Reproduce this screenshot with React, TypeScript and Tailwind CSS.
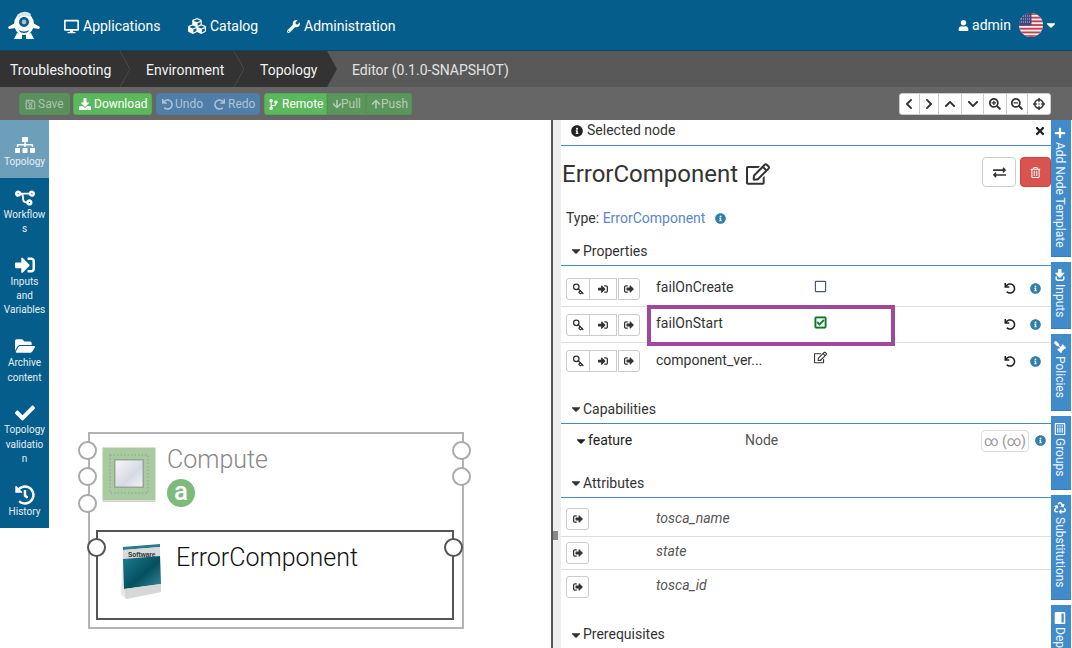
import type { ReactNode } from "react";
import { Key } from "lucide-react";
import {
  FaArrowDown,
  FaArrowUp,
  FaCaretDown,
  FaCheck,
  FaChevronDown,
  FaChevronLeft,
  FaChevronRight,
  FaChevronUp,
  FaCodeBranch,
  FaCrosshairs,
  FaCubes,
  FaDesktop,
  FaDownload,
  FaExchangeAlt,
  FaFolderOpen,
  FaGavel,
  FaHistory,
  FaInfoCircle,
  FaPlus,
  FaRecycle,
  FaRedo,
  FaRegCheckSquare,
  FaRegEdit,
  FaRegListAlt,
  FaRegSave,
  FaRegSquare,
  FaRegTrashAlt,
  FaSearchMinus,
  FaSearchPlus,
  FaSignInAlt,
  FaSignOutAlt,
  FaSitemap,
  FaTimes,
  FaUndo,
  FaUser,
  FaWindowMaximize,
  FaWrench,
} from "react-icons/fa";

function Logo() {
  return (
    <svg viewBox="0 0 32 32" className="h-[32px] w-[32px]">
      <ellipse cx="16" cy="15" rx="10" ry="11" fill="#fff" />
      <path d="M9 6 Q16 0 23 5 L22 8 Q16 5 10 9 Z" fill="#d8e6ee" />
      <path d="M7 14 L0 18 L1 20 L7 19 Z M25 14 L32 18 L31 20 L25 19 Z" fill="#fff" />
      <path d="M9 24 L6 30 L14 30 L14 25 Z M23 24 L26 30 L18 30 L18 25 Z" fill="#fff" />
      <circle cx="16" cy="13" r="5" fill="#055d8c" />
      <circle cx="16" cy="13" r="2.4" fill="#9fc3d6" />
      <path d="M11 21 Q16 24 21 21 L20 23 Q16 25 12 23 Z" fill="#055d8c" />
    </svg>
  );
}

function Flag() {
  const stripes = [0, 2, 4, 6, 8, 10, 12];
  return (
    <svg viewBox="0 0 24 24" className="h-[24px] w-[24px]">
      <defs>
        <clipPath id="flag-clip">
          <circle cx="12" cy="12" r="12" />
        </clipPath>
      </defs>
      <g clipPath="url(#flag-clip)">
        <rect width="24" height="24" fill="#f3f0f0" />
        {stripes.map((s) => (
          <rect key={s} y={s * 1.85} width="24" height="1.85" fill="#c2404f" />
        ))}
        <rect width="12.5" height="12.5" fill="#3f4a80" />
        <path d="M2 3h9M2 6h9M2 9h9" stroke="#b9bfdc" strokeWidth="1" strokeDasharray="1 1" />
      </g>
    </svg>
  );
}

function ChipIcon() {
  return (
    <svg viewBox="0 0 54 56" className="h-[56px] w-[54px]">
      <defs>
        <linearGradient id="chip-core" x1="0" y1="0" x2="1" y2="1">
          <stop offset="0" stopColor="#f7f8fa" />
          <stop offset="0.6" stopColor="#d6d9e2" />
          <stop offset="1" stopColor="#f3f4f6" />
        </linearGradient>
      </defs>
      <rect x="0.5" y="0.5" width="53" height="53" fill="#a9c9a0" />
      <rect x="0.5" y="53.5" width="53" height="1.5" fill="#d5d5d5" />
      <rect x="8" y="8" width="38" height="38" fill="none" stroke="#93b18d" strokeWidth="1.5" strokeDasharray="1.5 2" />
      <rect x="12" y="12" width="30" height="29" fill="#97a694" />
      <rect x="13.5" y="13.5" width="27" height="26" fill="url(#chip-core)" />
    </svg>
  );
}

function BoxIcon() {
  return (
    <svg viewBox="0 0 42 56" className="h-[56px] w-[42px]">
      <defs>
        <linearGradient id="box-front" x1="0" y1="0" x2="1" y2="1">
          <stop offset="0" stopColor="#1d7c8f" />
          <stop offset="0.55" stopColor="#04505f" />
          <stop offset="1" stopColor="#3a8a9b" />
        </linearGradient>
      </defs>
      <path d="M3 4 L40 1 L41 48 L6 55 L1 50 Z" fill="#e6e8e8" />
      <path d="M3 3 L40 0 L40 3 L3 6 Z" fill="#2b7a8c" />
      <path d="M3 6 L40 3 L40 12 L3 15 Z" fill="#d5dada" />
      <text x="8" y="12.5" fontSize="6.5" fontWeight="700" fill="#333" fontFamily="Liberation Sans, sans-serif">
        Software
      </text>
      <path d="M3 15 L40 12 L41 40 L4 45 Z" fill="url(#box-front)" />
      <path d="M4 45 L41 40 L41 48 L6 55 Z" fill="#d6d8d8" />
    </svg>
  );
}

function Port({ className }: { className: string }) {
  return <div className={`absolute h-[19px] w-[19px] rounded-full border-2 bg-white ${className}`} />;
}

function ToolBtn({
  icon,
  label,
  className,
}: {
  icon: ReactNode;
  label: string;
  className: string;
}) {
  return (
    <button type="button" className={`flex h-[22px] items-center border px-[5px] pt-px text-[12px] [&>svg]:shrink-0 ${className}`}>
      {icon}
      {label}
    </button>
  );
}

function NavBtn({ icon, width }: { icon: ReactNode; width: string }) {
  return (
    <button
      type="button"
      className={`flex h-full items-center justify-center border-r border-[#ccc] text-[12px] text-[#333] last:border-r-0 ${width}`}
    >
      {icon}
    </button>
  );
}

function Crumb({ label, width }: { label: string; width: string }) {
  return (
    <div className={`flex h-full items-center pt-[3px] ${width}`}>
      <span className="text-[14px] text-[#f2f2f2]">{label}</span>
    </div>
  );
}

function CrumbSep() {
  return (
    <svg viewBox="0 0 10 36" className="h-[36px] w-[10px] shrink-0">
      <path d="M0 0 L10 18 L0 36" fill="none" stroke="#4a4a4a" strokeWidth="1" />
    </svg>
  );
}

function SideItem({
  icon,
  label,
  first,
  active,
}: {
  icon: ReactNode;
  label: string;
  first?: boolean;
  active?: boolean;
}) {
  return (
    <div
      className={`flex flex-col items-center pb-[8.5px] ${first ? "pt-[15px]" : "pt-[10px]"} ${active ? "bg-[#6d9fba]" : ""}`}
    >
      <div className="flex h-[20px] items-center text-[20px] text-white">{icon}</div>
      <div className="w-full px-[3px] text-center text-[10px] leading-[14.3px] wrap-anywhere text-[#e4eef4]">{label}</div>
    </div>
  );
}

function SectionHead({ label }: { label: string }) {
  return (
    <div className="flex h-[32px] shrink-0 items-center border-b border-[#428bca] pl-[8px] pt-[3px] text-[14px] text-[#333]">
      <FaCaretDown className="text-[14px]" />
      {label}
    </div>
  );
}

function Info({ className }: { className?: string }) {
  return <FaInfoCircle className={`shrink-0 text-[11px] text-[#2f7fa8] ${className ?? ""}`} />;
}

function SmallBtn({ icon, className }: { icon: ReactNode; className: string }) {
  return (
    <button
      type="button"
      className={`flex h-[22px] items-center justify-center border border-[#ccc] bg-white text-[10px] text-[#333] ${className}`}
    >
      {icon}
    </button>
  );
}

function PropRow({ name, value, last }: { name: string; value: ReactNode; last?: boolean }) {
  return (
    <div className={`flex h-[36px] items-center pl-[5px] ${last ? "" : "border-b border-[#ddd]"}`}>
      <div className="flex w-[90px] shrink-0">
        <SmallBtn icon={<Key size={12} strokeWidth={2.5} className="rotate-90" />} className="w-[24px] rounded-l-[3px]" />
        <SmallBtn icon={<FaSignInAlt />} className="-ml-px w-[28px]" />
        <SmallBtn icon={<FaSignOutAlt />} className="ml-px w-[22px] rounded-r-[3px]" />
      </div>
      <span className="w-[158px] shrink-0 -translate-y-px text-[14px] text-[#333]">{name}</span>
      <span className="flex w-[183px] shrink-0 -translate-y-[2px] items-center text-[13px]">{value}</span>
      <FaUndo className="w-[26px] shrink-0 text-[11px] text-[#222]" />
      <Info className="ml-[7px]" />
    </div>
  );
}

function AttrRow({ name, last }: { name: string; last?: boolean }) {
  return (
    <div className={`flex h-[33.5px] items-center pl-[5px] ${last ? "" : "border-b border-[#ddd]"}`}>
      <div className="w-[90px] shrink-0">
        <SmallBtn icon={<FaSignOutAlt />} className="w-[23px] rounded-[3px]" />
      </div>
      <span className="-translate-y-px text-[14px] italic text-[#555]">{name}</span>
    </div>
  );
}

function SideTab({ icon, label, height }: { icon: ReactNode; label: string; height: string }) {
  return (
    <div
      className={`mb-[5px] flex w-[20px] shrink-0 items-center gap-[3px] overflow-hidden border-b border-[#3a7bb5] bg-[#428bca] pr-[2px] pt-[7px] text-[12px] text-[#eef5fb] [writing-mode:vertical-rl] ${height}`}
    >
      <span className="flex h-[12px] w-[18px] items-center justify-center text-[12px] text-white">{icon}</span>
      <span className="whitespace-nowrap">{label}</span>
    </div>
  );
}

export default function App() {
  return (
    <div className="h-[648px] w-[1072px] overflow-hidden bg-white font-['Roboto',sans-serif]">
      <header className="flex h-[51px] items-center border-b border-[#04496e] bg-[#055d8c] pl-[8px] pr-[14px] text-white">
        <Logo />
        <nav className="ml-[24px] flex items-center pt-[2px] text-[14px]">
          <a className="flex w-[124px] items-center gap-[4px]">
            <FaDesktop className="text-[15px]" /> Applications
          </a>
          <a className="flex w-[99px] items-center gap-[4px]">
            <FaCubes className="text-[18px]" /> Catalog
          </a>
          <a className="flex items-center gap-[4px]">
            <FaWrench className="text-[13px]" /> Administration
          </a>
        </nav>
        <div className="ml-auto flex items-center">
          <FaUser className="text-[11px]" />
          <span className="ml-[3px] text-[14px]">admin</span>
          <span className="ml-[8px]">
            <Flag />
          </span>
          <FaCaretDown className="ml-[1px] text-[14px]" />
        </div>
      </header>

      <div className="flex h-[36px] items-center bg-[#595959]">
        <div className="flex h-full items-center bg-[#333] pl-[10px]">
          <Crumb label="Troubleshooting" width="w-[110px]" />
          <CrumbSep />
          <div className="w-[16px]" />
          <Crumb label="Environment" width="w-[88px]" />
          <CrumbSep />
          <div className="w-[16px]" />
          <Crumb label="Topology" width="w-[67px]" />
        </div>
        <svg viewBox="0 0 10 36" className="h-[36px] w-[10px] shrink-0">
          <path d="M0 0 L10 18 L0 36 Z" fill="#333" />
        </svg>
        <span className="ml-[15px] pt-[2px] text-[14px] text-[#e2e2e2]">Editor (0.1.0-SNAPSHOT)</span>
      </div>

      <div className="flex h-[33px] items-center bg-[#666] pl-[19px]">
        <ToolBtn icon={<FaRegSave className="text-[11px]" />} label="Save" className="w-[51px] gap-[2px] rounded-[3px] border-[#55905a] bg-[#5b8f5d] text-[#a9c4aa]" />
        <ToolBtn icon={<FaDownload />} label="Download" className="ml-[3px] w-[79px] gap-[3px] rounded-[3px] border-[#4cae4c] bg-[#5cb85c] text-white" />
        <div className="ml-[4px] flex">
          <ToolBtn icon={<FaUndo className="text-[11px]" />} label="Undo" className="w-[52px] gap-[2px] rounded-l-[3px] border-[#4f7ca6] bg-[#4f7ea9] text-[#aec3d6]" />
          <ToolBtn icon={<FaRedo className="text-[11px]" />} label="Redo" className="w-[52px] gap-[3px] rounded-r-[3px] border-[#4f7ca6] bg-[#4f7ea9] text-[#aec3d6]" />
        </div>
        <div className="ml-[4px] flex">
          <ToolBtn icon={<FaCodeBranch className="-mx-[2px] text-[11px]" />} label="Remote" className="w-[63px] gap-[5px] rounded-l-[3px] border-[#4cae4c] bg-[#5cb85c] text-white" />
          <ToolBtn icon={<FaArrowDown className="-mx-[1px] text-[10px]" />} label="Pull" className="w-[39px] border-[#55905a] bg-[#5b965d] text-[#b4cdb5]" />
          <ToolBtn icon={<FaArrowUp className="-mx-[1px] text-[10px]" />} label="Push" className="w-[46px] gap-[1px] rounded-r-[3px] border-[#55905a] bg-[#5b965d] text-[#b4cdb5]" />
        </div>
        <div className="ml-[487px] flex h-[22px] w-[152px] overflow-hidden rounded-[3px] border border-[#ccc] bg-white">
          <NavBtn icon={<FaChevronLeft />} width="w-[20px]" />
          <NavBtn icon={<FaChevronRight />} width="w-[20px]" />
          <NavBtn icon={<FaChevronUp />} width="w-[23px]" />
          <NavBtn icon={<FaChevronDown />} width="w-[22px]" />
          <NavBtn icon={<FaSearchPlus />} width="w-[23px]" />
          <NavBtn icon={<FaSearchMinus />} width="w-[22px]" />
          <NavBtn icon={<FaCrosshairs />} width="w-[22px]" />
        </div>
      </div>

      <main className="flex h-[528px]">
        <aside className="w-[49px] shrink-0 self-start bg-[#055d8c]">
          <SideItem first active icon={<FaSitemap />} label="Topology" />
          <SideItem icon={<FaCodeBranch className="rotate-90" />} label="Workflows" />
          <SideItem icon={<FaSignInAlt />} label="Inputs and Variables" />
          <SideItem icon={<FaFolderOpen />} label="Archive content" />
          <SideItem icon={<FaCheck />} label="Topology validation" />
          <SideItem icon={<FaHistory />} label="History" />
        </aside>

        <div className="relative w-[502px] shrink-0">
          <div className="absolute left-[39px] top-[312px] h-[197px] w-[376px] border-2 border-[#b3b3b3]" />
          <Port className="left-[29px] top-[321px] border-[#aaa]" />
          <Port className="left-[29px] top-[347px] border-[#aaa]" />
          <Port className="left-[29px] top-[374px] border-[#aaa]" />
          <Port className="left-[403px] top-[321px] border-[#aaa]" />
          <Port className="left-[403px] top-[347px] border-[#aaa]" />
          <div className="absolute left-[53px] top-[327px]">
            <ChipIcon />
          </div>
          <div className="absolute left-[118px] top-[321px] text-[25px] font-light text-[#888]">Compute</div>
          <div className="absolute left-[118px] top-[359px] flex h-[28px] w-[28px] items-center justify-center rounded-full bg-[#7dbb7a] pb-[3px] text-[26px] font-medium text-white">
            a
          </div>

          <div className="absolute left-[47px] top-[410px] h-[90px] w-[358px] border-2 border-[#555]" />
          <Port className="left-[38px] top-[418px] border-[#555]" />
          <Port className="left-[395px] top-[418px] border-[#555]" />
          <div className="absolute left-[71px] top-[424px]">
            <BoxIcon />
          </div>
          <div className="absolute left-[127px] top-[419px] text-[25px] font-light text-[#111]">ErrorComponent</div>
        </div>

        <div className="relative flex min-w-0 flex-1 border-l-2 border-[#555]">
          <div className="relative w-[8px] shrink-0 bg-[#eee]">
            <div className="absolute left-0 top-[411px] h-[9px] w-[5px] bg-[#888]" />
          </div>
          <section className="flex w-[490px] shrink-0 flex-col overflow-hidden">
            <div className="flex h-[26px] shrink-0 items-center border-b border-[#428bca] pb-[4px] pl-[10px] pr-[5px] text-[14px] text-[#333]">
              <FaInfoCircle className="mr-[4px] text-[12px] text-[#222]" />
              Selected node
              <FaTimes className="ml-auto text-[12px] text-[#222]" />
            </div>

            <div className="flex h-[56px] shrink-0 items-start pt-[11px]">
              <h2 className="-mt-px flex items-center gap-[8px] pl-[1px] text-[24px] text-[#333]">
                ErrorComponent
                <FaRegEdit className="text-[24px]" />
              </h2>
              <button
                type="button"
                className="ml-auto flex h-[30px] w-[34px] items-center justify-center rounded-[4px] border border-[#ccc] bg-white text-[13px] text-[#333]"
              >
                <FaExchangeAlt />
              </button>
              <button
                type="button"
                className="ml-[4px] flex h-[30px] w-[31px] items-center justify-center rounded-[4px] border border-[#d43f3a] bg-[#d9534f] text-[11px] text-white"
              >
                <FaRegTrashAlt />
              </button>
            </div>

            <div className="flex h-[32px] shrink-0 items-center pl-[5px] text-[14px] text-[#333]">
              Type:&nbsp;<span className="text-[#5c86c9]">ErrorComponent</span>
              <Info className="ml-[10px]" />
            </div>

            <SectionHead label="Properties" />
            <div className="shrink-0 pt-[5px]">
              <PropRow name="failOnCreate" value={<FaRegSquare className="text-[#4a5a7a]" />} />
              <PropRow name="failOnStart" value={<FaRegCheckSquare className="stroke-[25px] text-[#0a7a2a]" />} />
              <PropRow name="component_ver..." value={<FaRegEdit className="-translate-y-[2px] text-[#333]" />} last />
            </div>

            <div className="mt-[13px]">
              <SectionHead label="Capabilities" />
            </div>
            <div className="flex h-[42px] shrink-0 items-start pr-[5px] pt-[6px]">
              <span className="flex w-[184px] items-center pl-[13px] text-[14px] text-[#222]">
                <FaCaretDown className="text-[14px]" />
                feature
              </span>
              <span className="text-[14px] text-[#555]">Node</span>
              <span className="ml-auto flex h-[22px] w-[48px] items-center justify-center rounded-[4px] border border-[#ddd] text-[14px] text-[#999]">
                ∞ (∞)
              </span>
              <Info className="ml-[6px] mt-[5px]" />
            </div>

            <SectionHead label="Attributes" />
            <div className="shrink-0 pt-[5px]">
              <AttrRow name="tosca_name" />
              <AttrRow name="state" />
              <AttrRow name="tosca_id" last />
            </div>

            <div className="mt-[14px]">
              <SectionHead label="Prerequisites" />
            </div>
          </section>
          <div className="flex w-[20px] shrink-0 flex-col overflow-hidden">
            <SideTab icon={<FaPlus />} label="Add Node Template" height="h-[137px]" />
            <SideTab icon={<FaSignInAlt className="rotate-90" />} label="Inputs" height="h-[67px]" />
            <SideTab icon={<FaGavel className="rotate-90" />} label="Policies" height="h-[77px]" />
            <SideTab icon={<FaRegListAlt className="rotate-90" />} label="Groups" height="h-[74px]" />
            <SideTab icon={<FaRecycle />} label="Substitutions" height="h-[105px]" />
            <SideTab icon={<FaWindowMaximize className="rotate-90" />} label="Dependencies" height="h-[80px]" />
          </div>
          <div className="pointer-events-none absolute left-[94px] top-[185px] h-[41px] w-[248px] border-4 border-[#a0479e]" />
        </div>
      </main>
    </div>
  );
}
